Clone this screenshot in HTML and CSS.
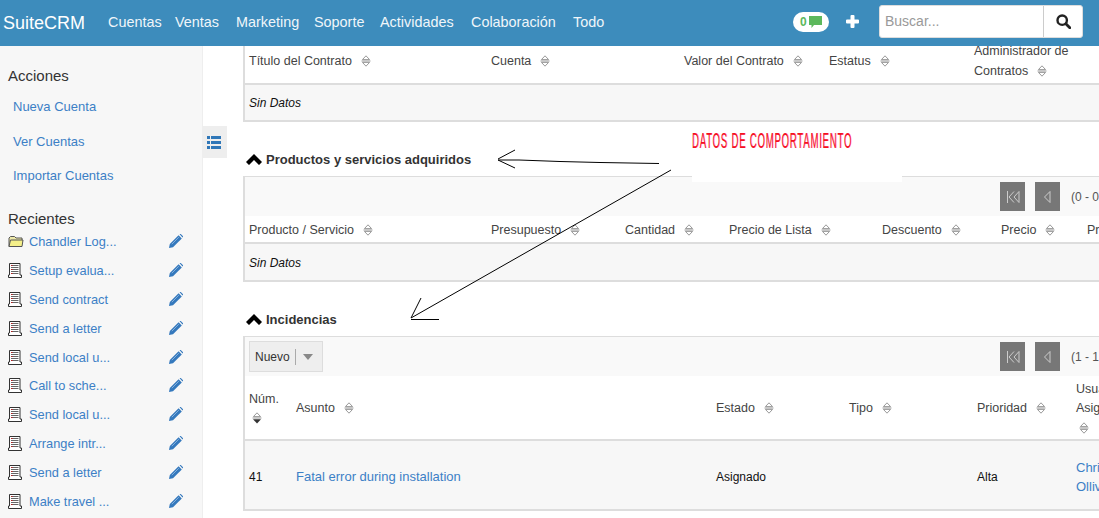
FILE: index.html
```html
<!DOCTYPE html>
<html lang="es">
<head>
<meta charset="utf-8">
<title>SuiteCRM</title>
<link rel="stylesheet" href="styles.css">
</head>
<body>
<svg class="defs" width="0" height="0" aria-hidden="true">
  <symbol id="sort" viewBox="0 0 10 12">
    <path d="M5 .8 8.600 4.600H1.400Z" fill="#fff" stroke="#999" stroke-width="1"/>
    <path d="M.5 6h9" stroke="#999" stroke-width="1"/>
    <path d="M5 11.200 1.400 7.400h7.200Z" fill="#fff" stroke="#999" stroke-width="1"/>
  </symbol>
  <symbol id="sortdown" viewBox="0 0 10 12">
    <path d="M5 .8 8.600 4.600H1.400Z" fill="#fff" stroke="#999" stroke-width="1"/>
    <path d="M.5 6h9" stroke="#999" stroke-width="1"/>
    <path d="M5 11.600 1 7.200h8Z" fill="#333"/>
  </symbol>
  <symbol id="note" viewBox="0 0 14 15">
    <path d="M1.500.5h10.500v11.500h1.500v2.500H.5V12h1Z" fill="#fff" stroke="#333" stroke-width="1"/>
    <path d="M3 2.500h7.500M3 4.500h7.500M3 6.500h7.500M3 8.500h7.500M3 10.500h7.500" stroke="#666" stroke-width="1"/>
    <path d="M3 2.500h1.500M3 6.500h1.500M3 10.500h1.500" stroke="#b22" stroke-width="1"/>
  </symbol>
  <symbol id="folder" viewBox="0 0 16 13">
    <path d="M1 11.500V3l1.500-1.500h4L8 3h6v2" fill="#eee9a8" stroke="#555" stroke-width="1"/>
    <path d="M1 11.500 2.500 5h12.500l-1 6.500Z" fill="#f5f08a" stroke="#555" stroke-width="1"/>
  </symbol>
  <symbol id="pencil" viewBox="0 0 14 14">
    <path d="M0 14 .8 10 9.600 1.200l3.200 3.200L4 13.200Z" fill="#3579bd"/>
    <path d="M10.600.3 11 0q.6-.2 1 .2l1.800 1.800q.4.4.1 1l-.4.4Z" fill="#3579bd"/>
    <path d="M2.800 10.200 9.800 3.200" stroke="#9cc0e4" stroke-width=".8"/>
  </symbol>
  <symbol id="chev" viewBox="0 0 16 11">
    <path d="M8 0 16 8 13 11 8 6 3 11 0 8Z" fill="#000"/>
  </symbol>
  <symbol id="first" viewBox="0 0 14 14">
    <path d="M1.500 1v12M8 1.500 3 7l5 5.500M13 1.500 8 7l5 5.500V1.500" fill="none" stroke="#ccc" stroke-width="1"/>
  </symbol>
  <symbol id="prev" viewBox="0 0 14 14">
    <path d="M9 1.500 3.500 7 9 12.500Z" fill="none" stroke="#ccc" stroke-width="1"/>
  </symbol>
</svg>

<header class="topbar">
  <a class="brand">SuiteCRM</a>
  <nav class="nav">
    <a class="nav-cuentas">Cuentas</a>
    <a class="nav-ventas">Ventas</a>
    <a class="nav-marketing">Marketing</a>
    <a class="nav-soporte">Soporte</a>
    <a class="nav-actividades">Actividades</a>
    <a class="nav-colab">Colaboración</a>
    <a>Todo</a>
  </nav>
  <div class="tools">
    <span class="badge">0
      <svg class="bubble" width="13" height="12" viewBox="0 0 13 12"><path d="M0 0h13v9H5L2.500 12V9H0Z" fill="#5cb85c"/></svg>
    </span>
    <svg class="plus" width="13" height="13" viewBox="0 0 13 13"><path d="M4.500 1q0-1 1-1h2q1 0 1 1v3.500H12q1 0 1 1v2q0 1-1 1H8.500V12q0 1-1 1h-2q-1 0-1-1V8.500H1q-1 0-1-1v-2q0-1 1-1h3.500Z" fill="#fff"/></svg>
    <form class="search">
      <span class="search-input">Buscar...</span>
      <span class="search-btn">
        <svg width="15" height="15" viewBox="0 0 15 15"><circle cx="6.200" cy="6.200" r="4.700" fill="none" stroke="#222" stroke-width="2.400"/><path d="m9.800 9.800 4 4" stroke="#222" stroke-width="2.800" stroke-linecap="round"/></svg>
      </span>
    </form>
  </div>
</header>

<div class="layout">
  <aside class="sidebar">
    <h3 class="side-title">Acciones</h3>
    <ul class="actions">
      <li><a>Nueva Cuenta</a></li>
      <li><a>Ver Cuentas</a></li>
      <li><a>Importar Cuentas</a></li>
    </ul>
    <h3 class="side-title recent-title">Recientes</h3>
    <ul class="recent">
      <li><svg class="ri ri-folder"><use href="#folder"/></svg><a>Chandler Log...</a><svg class="pen"><use href="#pencil"/></svg></li>
      <li><svg class="ri"><use href="#note"/></svg><a>Setup evalua...</a><svg class="pen"><use href="#pencil"/></svg></li>
      <li><svg class="ri"><use href="#note"/></svg><a>Send contract</a><svg class="pen"><use href="#pencil"/></svg></li>
      <li><svg class="ri"><use href="#note"/></svg><a>Send a letter</a><svg class="pen"><use href="#pencil"/></svg></li>
      <li><svg class="ri"><use href="#note"/></svg><a>Send local u...</a><svg class="pen"><use href="#pencil"/></svg></li>
      <li><svg class="ri"><use href="#note"/></svg><a>Call to sche...</a><svg class="pen"><use href="#pencil"/></svg></li>
      <li><svg class="ri"><use href="#note"/></svg><a>Send local u...</a><svg class="pen"><use href="#pencil"/></svg></li>
      <li><svg class="ri"><use href="#note"/></svg><a>Arrange intr...</a><svg class="pen"><use href="#pencil"/></svg></li>
      <li><svg class="ri"><use href="#note"/></svg><a>Send a letter</a><svg class="pen"><use href="#pencil"/></svg></li>
      <li><svg class="ri"><use href="#note"/></svg><a>Make travel ...</a><svg class="pen"><use href="#pencil"/></svg></li>
    </ul>
  </aside>

  <div class="toggle-col">
    <span class="toggle">
      <svg width="14" height="13" viewBox="0 0 14 13"><path d="M0 0h3v3H0ZM4 0h10v3H4ZM0 5h3v3H0ZM4 5h10v3H4ZM0 10h3v3H0ZM4 10h10v3H4Z" fill="#2f77b8"/></svg>
    </span>
  </div>

  <main class="main">
    <section class="panel panel-first">
      <table class="grid g1">
        <colgroup><col class="c242"><col class="c193"><col class="c145"><col class="c145"><col class="c173"></colgroup>
        <thead><tr class="h45">
          <th>Título del Contrato<svg class="s"><use href="#sort"/></svg></th>
          <th>Cuenta<svg class="s"><use href="#sort"/></svg></th>
          <th>Valor del Contrato<svg class="s"><use href="#sort"/></svg></th>
          <th>Estatus<svg class="s"><use href="#sort"/></svg></th>
          <th class="th-narrow">Administrador de Contratos<svg class="s"><use href="#sort"/></svg></th>
        </tr></thead>
        <tbody><tr class="r36"><td colspan="5" class="empty">Sin Datos</td></tr></tbody>
      </table>
    </section>

    <h2 class="sec-title"><svg class="chev"><use href="#chev"/></svg>Productos y servicios adquiridos</h2>
    <section class="panel">
      <div class="toolbar">
        <span class="pg"><svg class="pgi"><use href="#first"/></svg></span>
        <span class="pg"><svg class="pgi"><use href="#prev"/></svg></span>
        <span class="pg-text">(0 - 0 de 0)</span>
      </div>
      <table class="grid g2">
        <colgroup><col class="c242"><col class="c134"><col class="c104"><col class="c153"><col class="c119"><col class="c86"><col class="c60"></colgroup>
        <thead><tr class="h27">
          <th>Producto / Servicio<svg class="s"><use href="#sort"/></svg></th>
          <th>Presupuesto<svg class="s"><use href="#sort"/></svg></th>
          <th>Cantidad<svg class="s"><use href="#sort"/></svg></th>
          <th>Precio de Lista<svg class="s"><use href="#sort"/></svg></th>
          <th>Descuento<svg class="s"><use href="#sort"/></svg></th>
          <th>Precio<svg class="s"><use href="#sort"/></svg></th>
          <th>Precio</th>
        </tr></thead>
        <tbody><tr class="r37"><td colspan="7" class="empty">Sin Datos</td></tr></tbody>
      </table>
    </section>

    <h2 class="sec-title"><svg class="chev"><use href="#chev"/></svg>Incidencias</h2>
    <section class="panel">
      <div class="toolbar toolbar-b">
        <span class="btn-new">Nuevo<i class="btn-sep"></i><i class="caret"></i></span>
        <span class="pg"><svg class="pgi"><use href="#first"/></svg></span>
        <span class="pg"><svg class="pgi"><use href="#prev"/></svg></span>
        <span class="pg-text">(1 - 1 de 1)</span>
      </div>
      <table class="grid g3">
        <colgroup><col class="c47"><col class="c420"><col class="c133"><col class="c128"><col class="c99"><col class="c71"></colgroup>
        <thead><tr class="h64">
          <th>Núm.<svg class="s s-wrap"><use href="#sortdown"/></svg></th>
          <th>Asunto<svg class="s"><use href="#sort"/></svg></th>
          <th>Estado<svg class="s"><use href="#sort"/></svg></th>
          <th>Tipo<svg class="s"><use href="#sort"/></svg></th>
          <th>Prioridad<svg class="s"><use href="#sort"/></svg></th>
          <th>Usuario Asignado<svg class="s s-wrap"><use href="#sort"/></svg></th>
        </tr></thead>
        <tbody><tr class="r69">
          <td class="val">41</td>
          <td class="link-cell"><a>Fatal error during installation</a></td>
          <td class="val">Asignado</td>
          <td></td>
          <td class="val">Alta</td>
          <td class="link-cell"><a>Chris Olliver</a></td>
        </tr></tbody>
      </table>
    </section>
  </main>
</div>

<div class="note-patch"><span class="note-text">DATOS DE COMPORTAMIENTO</span></div>
<svg class="arrows" width="1099" height="518" viewBox="0 0 1099 518" aria-hidden="true">
  <path d="M659 163.500 600 162.500 560 161.500 519 160H498M498 159 515 150M498 160 515 168" fill="none" stroke="#000" stroke-width="1"/>
  <path d="M671 170 411 318M411 318 421 298M411 319.500H439" fill="none" stroke="#000" stroke-width="1"/>
</svg>
</body>
</html>
```

FILE: styles.css
```css
* { box-sizing: border-box; }
html, body { margin: 0; padding: 0; width: 1099px; height: 518px; overflow: hidden; background: #fff; }
body { position: relative; font-family: "Liberation Sans", Arial, sans-serif; font-size: 13px; color: #444; }
a { color: #3c80c6; text-decoration: none; }
.defs { position: absolute; }

.topbar { display: flex; align-items: center; height: 46px; background: #3d8cbc; }
.brand { width: 108px; padding-left: 3px; font-size: 18px; color: #fff; }
.nav { display: flex; font-size: 14.400px; margin-top: -2px; }
.nav a { color: #f0f6fa; }
.nav-cuentas { width: 67px; }
.nav-ventas { width: 61px; }
.nav-marketing { width: 78px; }
.nav-soporte { width: 66px; }
.nav-actividades { width: 91px; }
.nav-colab { width: 102px; }
.tools { display: flex; align-items: center; margin-left: auto; padding-right: 16px; }
.badge { display: flex; align-items: center; gap: 2px; width: 36px; height: 20px; padding-left: 7px; border-radius: 10px; background: #fff; color: #5cb85c; font-size: 12px; font-weight: bold; margin-top: -3px; }
.plus { margin: -4px 20px 0 17px; }
.search { display: flex; width: 204px; height: 33px; border: 1px solid #ddd; border-radius: 3px; background: #fff; margin-top: -3px; }
.search-input { flex: 1; padding: 0 5px; font-size: 14px; line-height: 31px; color: #999; }
.search-btn { display: flex; align-items: center; justify-content: center; width: 39px; border-left: 1px solid #ccc; }

.layout { display: flex; height: 472px; }
.sidebar { flex: none; width: 203px; background: #f7f7f7; border-right: 1px solid #eee; padding: 20px 0 0 8px; }
.side-title { margin: 0; font-size: 15px; font-weight: normal; line-height: 19px; color: #333; }
.recent-title { margin-top: 15px; }
.actions { list-style: none; margin: 5px 0 0; padding: 0 0 0 5px; }
.actions li { height: 34.500px; line-height: 34px; }
.recent { list-style: none; margin: 0; padding: 0; font-size: 12.800px; }
.recent li { display: flex; align-items: center; height: 28.800px; }
.recent li a { width: 140px; }
.ri { flex: none; width: 14px; height: 15px; margin-right: 7px; }
.ri-folder { width: 16px; height: 13px; margin-right: 5px; }
.pen { flex: none; width: 14px; height: 14px; margin-top: -1px; }

.toggle-col { flex: none; width: 40px; }
.toggle { display: flex; align-items: center; width: 24px; height: 32px; margin-top: 80px; padding-left: 4px; background: #eee; }

.main { flex: 1; min-width: 0; overflow: hidden; }
.panel { width: 900px; border-style: solid; border-color: #ddd; border-width: 1px 0 2px 2px; }
.panel-first { border-top: 0; margin-top: -7px; }
.sec-title { display: flex; align-items: center; height: 54px; margin: 0; padding: 20px 0 0 3px; font-size: 13px; font-weight: bold; color: #333; }
.chev { width: 16px; height: 11px; margin-right: 4px; }

.toolbar { display: flex; align-items: center; height: 39px; padding-left: 755px; background: #f9f9f9; }
.toolbar-b { position: relative; }
.pg { display: flex; align-items: center; justify-content: center; width: 25px; height: 29px; margin-right: 10px; background: #777; }
.pgi { width: 14px; height: 14px; }
.pg-text { margin-left: 1px; font-size: 12px; white-space: nowrap; color: #555; }
.btn-new { position: absolute; left: 4px; top: 4px; display: flex; align-items: center; width: 74px; height: 31px; padding-left: 5px; border: 1px solid #ddd; background: #eee; font-size: 12px; color: #333; }
.btn-sep { width: 1px; height: 16px; margin: 0 7px 0 5px; background: #aaa; }
.caret { width: 0; height: 0; border: 5px solid transparent; border-top: 6px solid #888; border-bottom: 0; }

.grid { table-layout: fixed; border-collapse: collapse; width: 898px; background: #fff; }
.grid th { padding: 3px 6px 0 4px; font-weight: normal; font-size: 12.500px; line-height: 19.500px; text-align: left; vertical-align: middle; color: #444; border-bottom: 2px solid #ddd; }
.g1 th { padding-top: 1px; }
.grid .th-narrow { padding-right: 50px; }
.grid td { padding: 1px 6px 0 4px; background: #f7f7f7; font-size: 12.500px; line-height: 19.500px; }
.grid .empty { font-style: italic; font-size: 12px; color: #111; padding-top: 3px; }
.grid .val { font-size: 12px; color: #111; padding-top: 5px; }
.grid .link-cell { font-size: 13px; padding-top: 4px; }
.s { width: 10px; height: 12px; margin-left: 9px; vertical-align: -2px; }
.s-wrap { margin-left: 3px; }
.h45 { height: 45px; }
.r36 { height: 36px; }
.h27 { height: 27px; }
.r37 { height: 37px; }
.h64 { height: 64px; }
.r69 { height: 69px; }
.c242 { width: 242px; } .c193 { width: 193px; } .c145 { width: 145px; } .c173 { width: 173px; }
.c134 { width: 134px; } .c104 { width: 104px; } .c153 { width: 153px; } .c119 { width: 119px; } .c86 { width: 86px; } .c60 { width: 60px; }
.c47 { width: 47px; } .c420 { width: 420px; } .c133 { width: 133px; } .c128 { width: 128px; } .c99 { width: 99px; } .c71 { width: 71px; }

.note-patch { position: absolute; left: 692px; top: 122px; width: 210px; height: 60px; background: #fff; overflow: hidden; }
.note-text { position: absolute; left: 0; top: 8px; font-size: 22px; line-height: 22px; letter-spacing: 1.800px; white-space: nowrap; color: #f5101e; transform: scaleX(.435); transform-origin: left top; text-shadow: 1.500px 0 0 rgba(255, 80, 160, .5); }
.arrows { position: absolute; left: 0; top: 0; pointer-events: none; }
```
